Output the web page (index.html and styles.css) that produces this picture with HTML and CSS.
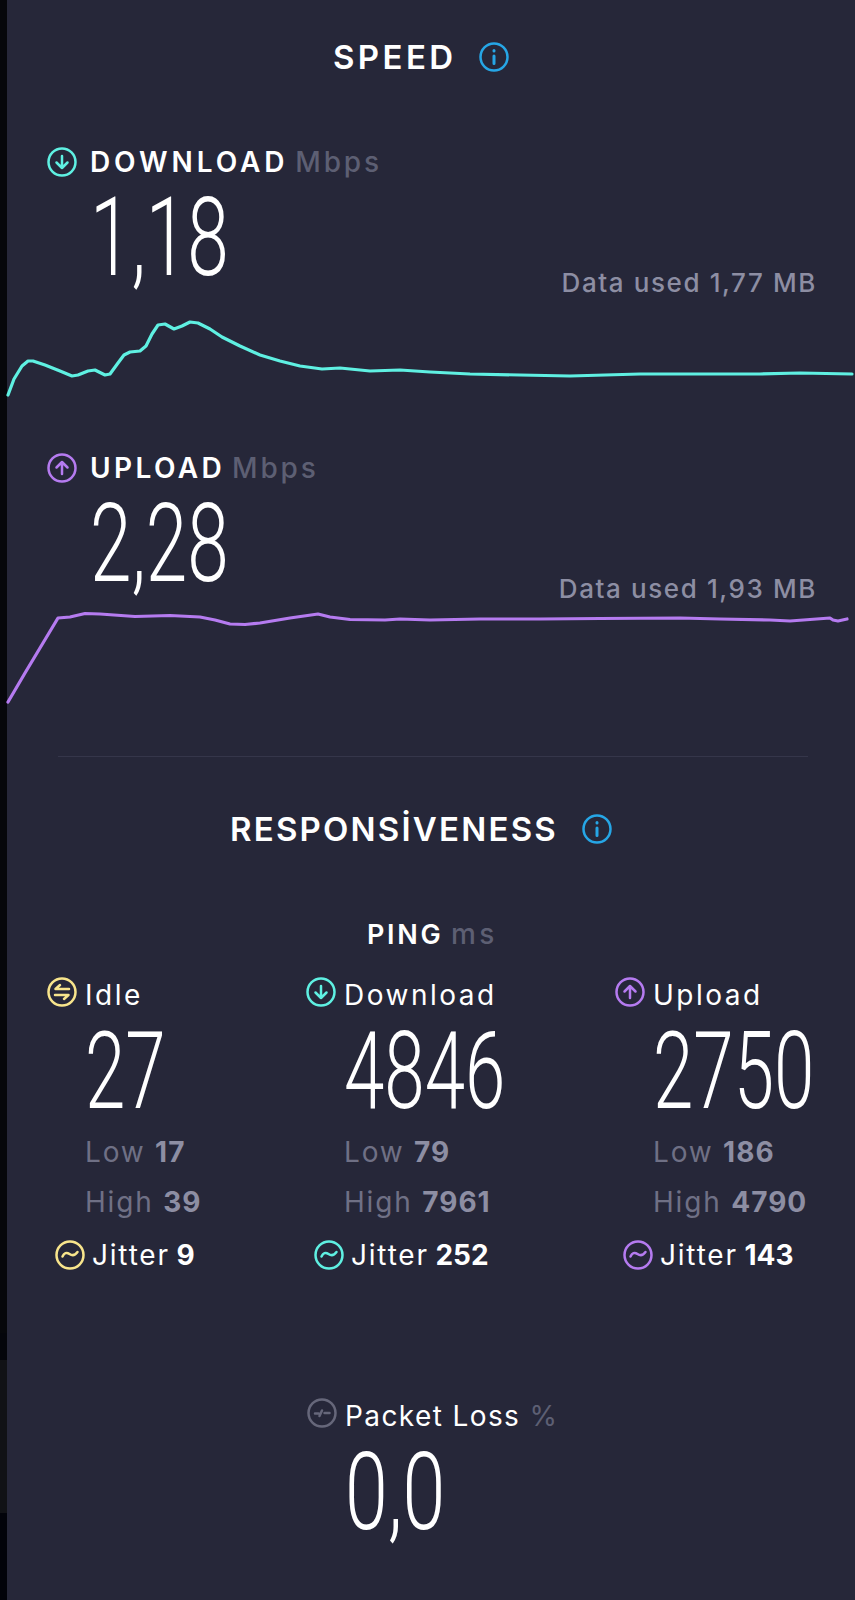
FILE: index.html
```html
<!DOCTYPE html>
<html lang="en">
<head>
    <meta charset="UTF-8">
    <meta name="viewport" content="width=device-width, initial-scale=1.0">
    <title>Speed results</title>
    <link rel="stylesheet" href="styles.css">
</head>
<body>

<svg class="defs" width="0" height="0">
    <symbol id="ic-down" viewBox="0 0 30 30"><circle cx="15" cy="15" r="13.500"/><path d="M15 9v12M9.500 15.500 15 21l5.500-5.500"/></symbol>
    <symbol id="ic-up" viewBox="0 0 30 30"><circle cx="15" cy="15" r="13.500"/><path d="M15 21V9M9.500 14.500 15 9l5.500 5.500"/></symbol>
    <symbol id="ic-idle" viewBox="0 0 30 30"><circle cx="15" cy="15" r="13.500"/><path d="M22 12H8.500L13 8M8 18h13.500L17 22"/></symbol>
    <symbol id="ic-jitter" viewBox="0 0 30 30"><circle cx="15" cy="15" r="13.500"/><path d="M7.500 16.500c1.500-3.500 4-4.500 7-2.500s5.500 1.500 8-2"/></symbol>
    <symbol id="ic-info" viewBox="0 0 30 30"><circle cx="15" cy="15" r="13.500"/><path class="stem" d="M15 14v7.500M15 8.500v.5"/></symbol>
    <symbol id="ic-loss" viewBox="0 0 30 30"><circle cx="15" cy="15" r="13.500"/><path d="M8 15.500h3.500M12.500 18l2.500-5.500M17.500 15h5"/></symbol>
</svg>

<main class="screen">
    <h2 class="title title-speed">SPEED <svg class="icon info"><use href="#ic-info"/></svg></h2>

    <section class="speed speed-down">
        <div class="speed-head">
            <svg class="icon cyan"><use href="#ic-down"/></svg>
            <span class="speed-name">DOWNLOAD</span>
            <span class="unit">Mbps</span>
        </div>
        <div class="speed-value"><span class="big">1,18</span></div>
        <div class="data-used">Data used 1,77 MB</div>
        <svg class="chart" viewBox="7 0 848 110" width="848" height="110">
            <polyline class="line-cyan" points="8,75 14,59 22,46 28,41 33,41 45,45 60,51 72,56 78,55 88,51 95,50 105,55 110,54 118,43 124,35 130,32 140,31 146,26 152,14 158,5 165,4 174,9 182,6 190,2 198,3 210,9 222,17 240,26 260,35 280,41 300,46 322,49 340,48 370,51 400,50 430,52 470,54 520,55 570,56 640,54 700,54 760,54 800,53 852,54"/>
        </svg>
    </section>

    <section class="speed speed-up">
        <div class="speed-head">
            <svg class="icon purple"><use href="#ic-up"/></svg>
            <span class="speed-name">UPLOAD</span>
            <span class="unit">Mbps</span>
        </div>
        <div class="speed-value"><span class="big">2,28</span></div>
        <div class="data-used">Data used 1,93 MB</div>
        <svg class="chart" viewBox="7 0 848 110" width="848" height="110">
            <polyline class="line-purple" points="8,95 25,66 58,11 70,10 85,6.500 100,7 135,9.500 170,8.500 200,10 215,13 230,17 245,17.500 260,16 290,11 318,7 330,10 350,12.500 385,13 400,12 430,13 480,12 540,12 600,11.500 680,11 720,12 770,13 790,14 830,11 833,13 838,14 847,12"/>
        </svg>
    </section>

    <hr class="divider">

    <h2 class="title title-resp">RESPONSİVENESS <svg class="icon info"><use href="#ic-info"/></svg></h2>

    <h3 class="ping">PING <span class="unit">ms</span></h3>

    <div class="ping-cols">
        <div class="ping-col col-idle">
            <div class="ping-head"><svg class="icon yellow"><use href="#ic-idle"/></svg><span>Idle</span></div>
            <div class="ping-value"><span class="big">27</span></div>
            <div class="range">Low <b>17</b></div>
            <div class="range">High <b>39</b></div>
            <div class="jitter"><svg class="icon yellow"><use href="#ic-jitter"/></svg><span>Jitter <b>9</b></span></div>
        </div>
        <div class="ping-col col-down">
            <div class="ping-head"><svg class="icon cyan"><use href="#ic-down"/></svg><span>Download</span></div>
            <div class="ping-value"><span class="big">4846</span></div>
            <div class="range">Low <b>79</b></div>
            <div class="range">High <b>7961</b></div>
            <div class="jitter"><svg class="icon cyan"><use href="#ic-jitter"/></svg><span>Jitter <b>252</b></span></div>
        </div>
        <div class="ping-col col-up">
            <div class="ping-head"><svg class="icon purple"><use href="#ic-up"/></svg><span>Upload</span></div>
            <div class="ping-value"><span class="big">2750</span></div>
            <div class="range">Low <b>186</b></div>
            <div class="range">High <b>4790</b></div>
            <div class="jitter"><svg class="icon purple"><use href="#ic-jitter"/></svg><span>Jitter <b>143</b></span></div>
        </div>
    </div>

    <div class="loss">
        <div class="ping-head"><svg class="icon grey"><use href="#ic-loss"/></svg><span>Packet Loss <span class="unit">%</span></span></div>
        <div class="ping-value"><span class="big">0,0</span></div>
    </div>
</main>

</body>
</html>
```

FILE: styles.css
```css
html, body {
    margin: 0;
    padding: 0;
}

/* the dark strip down the left edge is the body showing through */
body {
    width: 855px;
    height: 1600px;
    overflow: hidden;
    background: linear-gradient(to bottom, #06070b 0, #06070b 1333px, #04050b 1333px, #04050b 1360px, #111216 1360px, #111216 1513px, #02030a 1513px);
    font-family: Inter, "Open Sans", sans-serif;
    color: #fff;
}

.defs {
    display: block;
    height: 0;
}

.screen {
    height: 1600px;
    box-sizing: border-box;
    margin-left: 7px;
    padding-top: 37px;
    background-color: #262739;
}

/* icons */
.icon {
    width: 30px;
    height: 30px;
    flex: none;
    fill: none;
    stroke-width: 2.5;
    stroke-linecap: round;
    stroke-linejoin: round;
}

.cyan { stroke: #5ff0e2; }
.purple { stroke: #b57bf0; }
.yellow { stroke: #f8e58c; }
.grey { stroke: #66677a; }
.info { stroke: #26a6e6; }
.stem { stroke-width: 3; }

/* section titles */
.title {
    margin: 0;
    font-size: 33px;
    font-weight: 600;
    display: flex;
    align-items: center;
    height: 40px;
}

.title-speed {
    padding-left: 326px;
    letter-spacing: 3.4px;
}

.title-speed .info {
    margin-left: 22px;
}

.title-resp {
    margin-top: 52px;
    padding-left: 223px;
    letter-spacing: 2.2px;
}

.title-resp .info {
    margin-left: 24px;
}

/* speed blocks */
.speed {
    padding-left: 40px;
}

.speed-down {
    padding-top: 71px;
}

.speed-up {
    padding-top: 24px;
}

.speed-head {
    display: flex;
    align-items: center;
    height: 28px;
}

.speed-name {
    font-size: 28px;
    font-weight: 600;
    margin-left: 13px;
    letter-spacing: 3.4px;
}

.speed-down .speed-name {
    letter-spacing: 3.9px;
}

.speed-head .unit {
    font-size: 28px;
    margin-left: 7px;
    letter-spacing: 2.8px;
}

.unit {
    color: #5d5f73;
    font-weight: 500;
}

.speed-value {
    height: 129px;
    margin-top: -3px;
    padding-left: 43px;
}

.big {
    display: inline-block;
    font-family: Roboto, sans-serif;
    font-size: 110px;
    font-weight: 300;
    line-height: 129px;
    transform: scaleX(0.68);
    transform-origin: left center;
    white-space: nowrap;
}

.data-used {
    text-align: right;
    padding-right: 38px;
    margin-top: -34px;
    font-size: 26px;
    font-weight: 500;
    letter-spacing: 1.6px;
    color: #8d8ea3;
    line-height: 30px;
}

.chart {
    display: block;
    margin: 22px 0 0 -40px;
    overflow: visible;
}

.speed-up .chart {
    margin-top: 3px;
}

.chart polyline {
    fill: none;
    stroke-width: 3.2;
    stroke-linejoin: round;
    stroke-linecap: round;
}

.line-cyan { stroke: #5ff0e2; }
.line-purple { stroke: #b57bf0; }

.divider {
    border: 0;
    height: 1px;
    background-color: #35364a;
    margin: 39px 47px 0 51px;
}

/* ping */
.ping {
    margin: 68px 0 0 0;
    padding-left: 360px;
    font-size: 27px;
    font-weight: 600;
    letter-spacing: 2.7px;
    line-height: 34px;
}

.ping .unit {
    font-size: 28px;
    letter-spacing: 3.5px;
    margin-left: -2px;
}

.ping-cols {
    display: flex;
    margin-top: 24px;
    padding-left: 40px;
}

.ping-col {
    flex: none;
}

.col-idle { width: 259px; }
.col-down { width: 309px; }

.ping-head {
    display: flex;
    align-items: center;
    gap: 8px;
    height: 32px;
    font-size: 28px;
    font-weight: 400;
    letter-spacing: 2.5px;
    white-space: nowrap;
}

/* label text sits a bit under the middle of its icon */
.ping-head > span {
    padding-top: 6px;
}

.ping-head .unit {
    font-weight: 400;
    letter-spacing: 1px;
}

.loss .ping-head {
    letter-spacing: 1.4px;
}

.ping-value {
    padding-left: 38px;
    height: 125px;
    margin-top: 1px;
}

.ping-value .big {
    font-size: 107px;
    line-height: 125px;
}

.loss .big {
    transform: scaleX(0.72);
}

.range {
    padding-left: 38px;
    font-size: 28px;
    letter-spacing: 1.8px;
    line-height: 34px;
    margin-top: 1px;
    color: #6f7085;
}

.range + .range {
    margin-top: 16px;
}

.range b {
    color: #8d8ea3;
    font-weight: 700;
    letter-spacing: 1px;
}

.jitter {
    display: flex;
    align-items: center;
    gap: 7px;
    height: 32px;
    margin: 20px 0 0 8px;
    font-size: 28px;
    letter-spacing: 1.8px;
    word-spacing: -3px;
    white-space: nowrap;
}

.jitter b {
    font-weight: 700;
    letter-spacing: 0;
}

.loss {
    margin: 126px 0 0 300px;
}
```
